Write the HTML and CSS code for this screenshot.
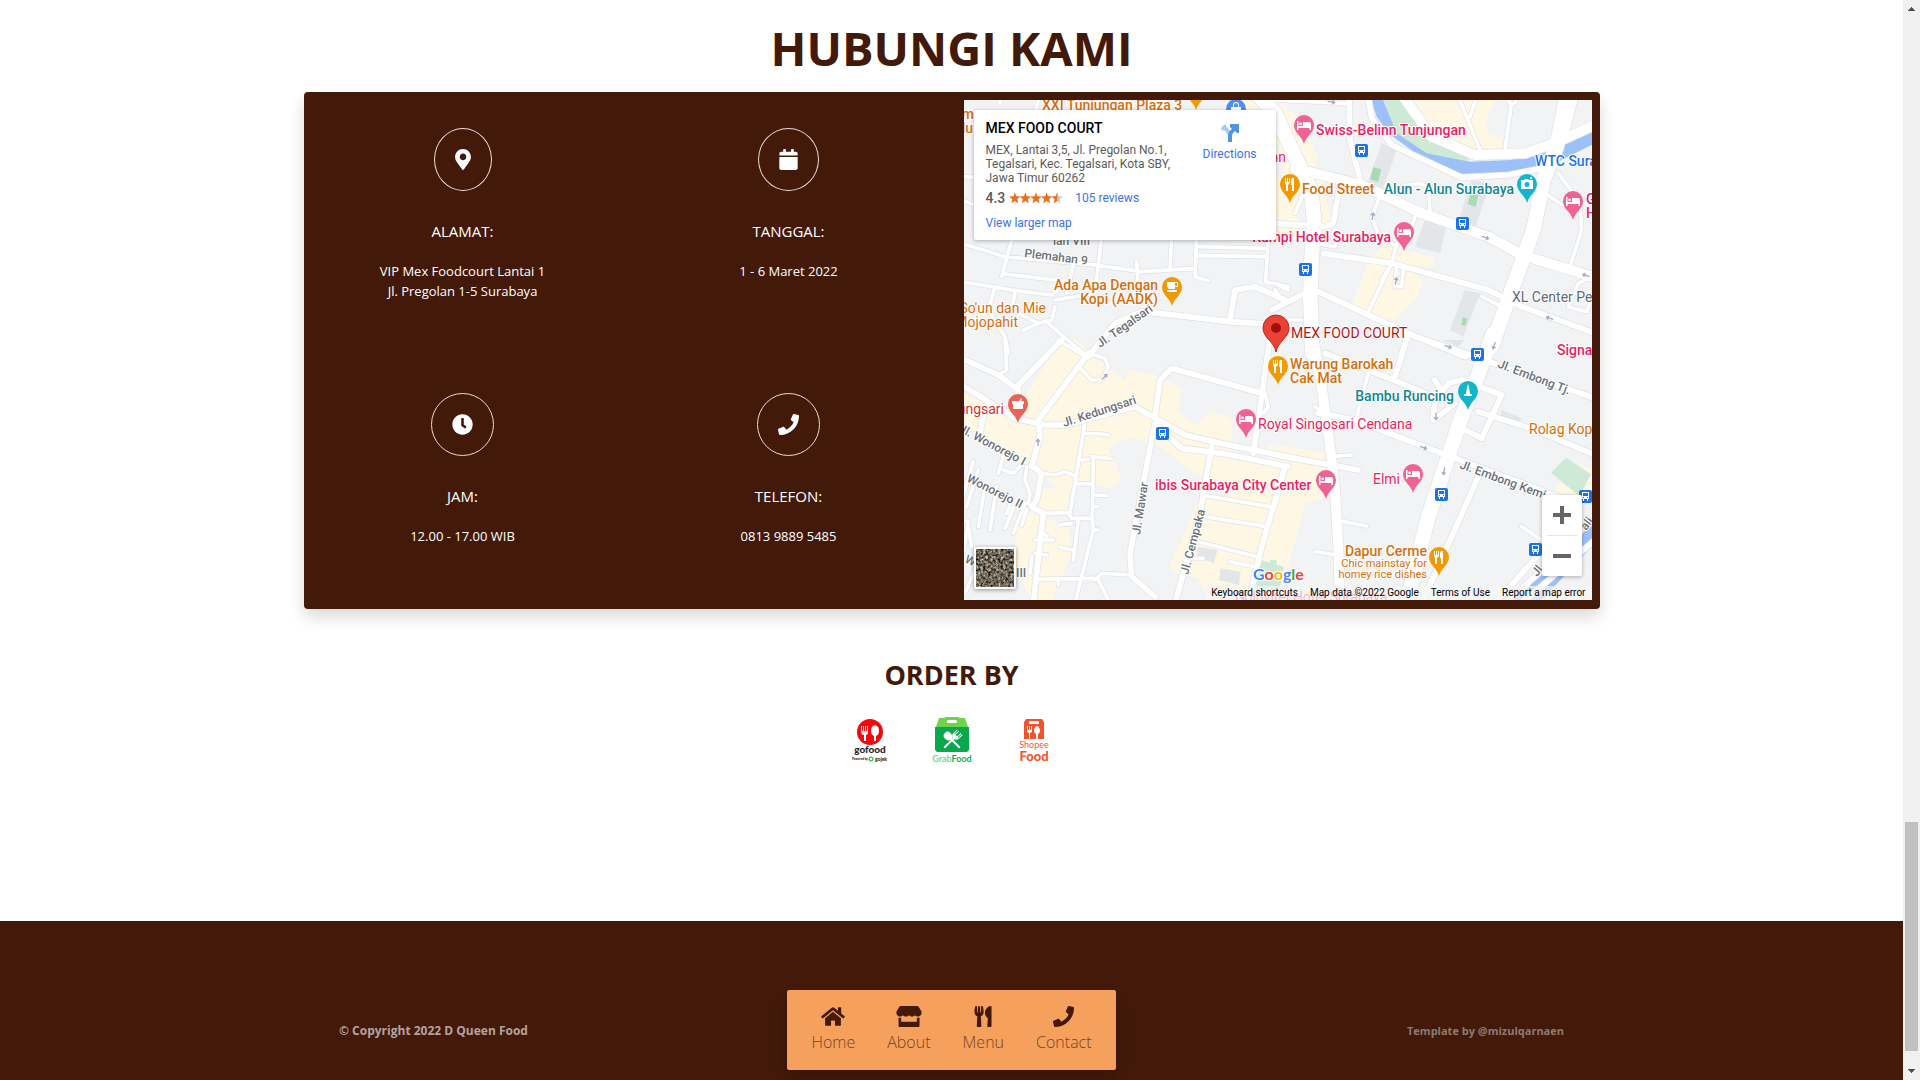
FILE: index.html
```html
<!DOCTYPE html>
<html lang="id">
<head>
<meta charset="utf-8">
<meta name="viewport" content="width=device-width, initial-scale=1">
<title>D Queen Food</title>
<link rel="stylesheet" href="styles.css">
</head>
<body>
<svg class="defs" aria-hidden="true">
  <defs>
    <symbol id="i-marker" viewBox="0 0 384 512"><path d="M172.268 501.67C26.97 291.031 0 269.413 0 192 0 85.961 85.961 0 192 0s192 85.961 192 192c0 77.413-26.97 99.031-172.268 309.67-9.535 13.774-29.93 13.773-39.464 0zM192 272c44.183 0 80-35.817 80-80s-35.817-80-80-80-80 35.817-80 80 35.817 80 80 80z"/></symbol>
    <symbol id="i-calendar" viewBox="0 0 448 512"><path d="M12 192h424c6.600 0 12 5.400 12 12v260c0 26.500-21.500 48-48 48H48c-26.500 0-48-21.500-48-48V204c0-6.600 5.400-12 12-12zm436-44v-36c0-26.500-21.500-48-48-48h-48V12c0-6.600-5.400-12-12-12h-40c-6.600 0-12 5.400-12 12v52H160V12c0-6.600-5.400-12-12-12h-40c-6.600 0-12 5.400-12 12v52H48C21.500 64 0 85.500 0 112v36c0 6.600 5.400 12 12 12h424c6.600 0 12-5.400 12-12z"/></symbol>
    <symbol id="i-clock" viewBox="0 0 512 512"><path d="M256 8C119 8 8 119 8 256s111 248 248 248 248-111 248-248S393 8 256 8zm92.490 313l-20 25a16 16 0 0 1-22.490 2.500l-67-49.720a40 40 0 0 1-15-31.230V112a16 16 0 0 1 16-16h32a16 16 0 0 1 16 16v144l58 42.500a16 16 0 0 1 2.490 22.500z"/></symbol>
    <symbol id="i-phone" viewBox="0 0 512 512"><path d="M493.400 24.600l-104-24c-11.300-2.600-22.900 3.300-27.500 13.900l-48 112c-4.200 9.800-1.400 21.300 6.900 28l60.600 49.600c-36 76.700-98.900 140.500-177.200 177.200l-49.600-60.600c-6.800-8.300-18.200-11.100-28-6.900l-112 48C3.900 366.500-2 378.100.6 389.400l24 104C27.100 504.200 36.700 512 48 512c256.100 0 464-207.500 464-464 0-11.200-7.700-20.900-18.600-23.400z"/></symbol>
    <symbol id="i-home" viewBox="0 0 576 512"><path d="M280.370 148.260L96 300.110V464a16 16 0 0 0 16 16l112.060-.29a16 16 0 0 0 15.920-16V368a16 16 0 0 1 16-16h64a16 16 0 0 1 16 16v95.640a16 16 0 0 0 16 16.050L464 480a16 16 0 0 0 16-16V300L295.670 148.260a12.190 12.190 0 0 0-15.300 0zM571.600 251.470L488 182.560V44.050a12 12 0 0 0-12-12h-56a12 12 0 0 0-12 12v72.610L318.470 43a48 48 0 0 0-61 0L4.340 251.470a12 12 0 0 0-1.600 16.900l25.500 31A12 12 0 0 0 45.150 301l235.220-193.740a12.190 12.190 0 0 1 15.300 0L530.900 301a12 12 0 0 0 16.900-1.600l25.500-31a12 12 0 0 0-1.700-16.930z"/></symbol>
    <symbol id="i-store" viewBox="0 0 616 512"><path d="M602 118L537 15C531 6 521 0 510 0H106C95 0 85 6 79 15L14 118c-34 54-4 128 59 137 5 1 9 1 14 1 30 0 56-13 74-33 18 20 44 33 73 33 30 0 56-13 74-33 18 20 44 33 74 33s56-13 73-33c18 20 44 33 74 33 5 0 9 0 14-1 63-9 93-83 59-137zM529 288c-10 0-20-2-30-4v100H117V284c-10 2-20 4-30 4-6 0-12 0-18-1-5-1-11-2-16-4v197c0 18 14 32 32 32h448c18 0 32-14 32-32V283c-6 2-11 3-17 4-6 1-12 1-19 1z"/></symbol>
    <symbol id="i-utensils" viewBox="0 0 416 512"><path d="M207.900 15.200c.8 4.700 16.100 94.500 16.100 128.800 0 52.300-27.800 89.600-68.900 104.600L168 486.700c.7 13.700-10.200 25.300-24 25.300H80c-13.700 0-24.700-11.500-24-25.300l12.900-238.100C27.700 233.600 0 196.200 0 144 0 109.600 15.300 19.900 16.100 15.200 19.300-5.100 61.400-5.400 64 16.300v141.200c1.300 3.400 15.100 3.200 16 0 1.400-25.300 7.900-139.200 8-141.800 3.300-20.800 44.700-20.800 47.900 0 .2 2.700 6.600 116.500 8 141.800.9 3.200 14.800 3.400 16 0V16.300c2.600-21.600 44.800-21.400 48-1.100zm119.200 285.700l-15 185.100c-1.200 14 9.900 26 23.900 26h56c13.300 0 24-10.700 24-24V24c0-13.200-10.700-24-24-24-82.500 0-221.400 178.500-64.900 300.900z"/></symbol>
    <path id="drop" d="M0 19C-2 11-10 8-10 0a10 10 0 1 1 20 0C10 8 2 11 0 19z"/>
    <g id="p-bed" class="pink"><use href="#drop"/><path fill="#fff" d="M-7-4h1.500v5H-1v-4h6a2 2 0 0 1 2 2v6H5.500V3h-11v2H-7zM-3.400-2.600a1.400 1.400 0 1 1 0 2.800 1.400 1.400 0 0 1 0-2.800z"/></g>
    <g id="p-food" class="orange"><use href="#drop"/><path fill="#fff" d="M-5-6h1v4h1v-4h1v4h1v-4h1v5L-2 1v6h-2V1l-1-2zM2-6h2V7H2V1H1v-5z"/></g>
    <g id="p-cup" class="orange"><use href="#drop"/><path fill="#fff" d="M-5-5H6v5H3v2h-6l-2-2zM3-4v3h2v-3zM-5 3H5v2H-5z"/></g>
    <g id="p-camera" class="teal"><use href="#drop"/><path fill="#fff" fill-rule="evenodd" d="M-6-4h3l1-1h3l1 1h4v9H-6zM0-2a2.500 2.500 0 1 0 0 5 2.500 2.500 0 0 0 0-5zM3-7h2v2H3z"/></g>
    <g id="p-tower" class="teal"><use href="#drop"/><path fill="#fff" d="M0-7l1 3 1 7h2v2h-8V3h2l1-7z"/></g>
    <g id="p-bowl" class="coral"><use href="#drop"/><path fill="#fff" d="M-6-3H1l2-3 1 1-1 2h3v3H5v5H-5V0h-1z"/></g>
    <g id="bus"><rect x="-6" y="-6" width="13" height="13" rx="2" fill="#1a73e8"/><path fill="#fff" fill-rule="evenodd" d="M-3-4h7v7H3v2H2V3h-3v2h-1V3h-1zm1 1v3h5v-3zm0 4v1h1V1zm4 0v1h1V1z"/></g>
    <path id="arrow" d="M-12-2H2v-6L12 0 2 8V2h-14z" fill="#a3a9c4"/>
    <path id="star" d="M6 0l1.500 4.200L12 4.400 8.500 7.200 9.700 11.500 6 9 2.300 11.500 3.500 7.200 0 4.400l4.500-.2z"/>
  </defs>
</svg>

<div class="page">
  <div class="content">
    <main class="contact">
      <h1>HUBUNGI KAMI</h1>
      <section class="card">
        <div class="infos">
          <div class="info">
            <span class="ring"><svg class="w16"><use href="#i-marker"/></svg></span>
            <h2>ALAMAT:</h2>
            <p>VIP Mex Foodcourt Lantai 1<br>Jl. Pregolan 1-5 Surabaya</p>
          </div>
          <div class="info">
            <span class="ring"><svg class="w19"><use href="#i-calendar"/></svg></span>
            <h2>TANGGAL:</h2>
            <p>1 - 6 Maret 2022</p>
          </div>
          <div class="info">
            <span class="ring"><svg class="w21"><use href="#i-clock"/></svg></span>
            <h2>JAM:</h2>
            <p>12.00 - 17.00 WIB</p>
          </div>
          <div class="info">
            <span class="ring"><svg class="w21"><use href="#i-phone"/></svg></span>
            <h2>TELEFON:</h2>
            <p>0813 9889 5485</p>
          </div>
        </div>
        <div class="map">
          <svg class="canvas" viewBox="0 0 628 500" preserveAspectRatio="xMidYMid slice" role="img" aria-label="Peta Mex Food Court">
            <defs>
              <g id="roads">
                <g transform="translate(-27,-30)">
                  <path class="s" d="M20 460L150 500 420 525 560 545 720 535M20 575L170 600 290 615 320 590M170 450L140 560M150 552L340 575M355 525L335 610M440 440L420 610 300 630M545 515L548 570M650 440L645 535M725 440L720 560 760 572M730 497L935 500M730 470L935 475M940 440L932 575 1000 590M180 600L172 660 250 700 205 720 250 700 290 690 300 650M120 590L100 660 150 740 160 790M280 700L350 760 400 800M27 260L60 262M20 330L60 345M250 30L240 70M135 20v20"/>
                  <path class="m" d="M400 800L480 700 560 665 700 680 820 695 1000 705M825 690L840 600 900 590 990 630"/>
                </g>
                <g transform="translate(933,-30)">
                  <path class="xl" d="M-120 -60L0 70 65 210 108 300 118 400 110 500 106 620 112 790"/>
                  <path class="l" d="M60 235L260 285 440 370 640 440 740 495 960 562M385 20L470 140 600 195 750 190 850 155 960 105M895 20L860 150"/>
                  <path class="xl" d="M875 20L845 170 805 270 775 420 750 490 710 600 650 770"/>
                  <path class="m" d="M280 20L290 85 350 165 560 262 700 255 800 235M222 20L225 150 258 280M145 490L350 520 640 600 740 650 960 730M130 605L400 730 570 800M0 400L150 410 175 400 190 310M-10 660L90 610"/>
                  <path class="s" d="M550 20L615 180M605 20L585 80M708 50L690 180M700 30a12 12 0 1 0 24 0M365 460L350 520 280 665M350 520L320 570M310 330L290 385 310 430 365 470M465 360L460 290 430 280 380 290M420 380L405 430M850 250L880 290 915 340 920 420 885 530M810 310L870 350M365 525L360 590 380 590 385 540M0 30L210 40M60 370L90 300M0 580L40 600M0 600L30 640M40 440L150 465 180 470 195 430M950 560L910 580 880 650 935 665 945 640M620 620L680 650M400 730L380 800M-10 690L80 690"/>
                </g>
                <g transform="translate(-27,720)">
                  <path class="m" d="M20 55L130 105 190 150 188 240M20 135L180 235 270 255 330 255 540 200 690 285 820 315 1000 350M600 250L680 325 800 340 1000 380M400 40L250 240 255 290 230 380M185 140L320 0M600 250L580 350 525 640 530 710 600 770M600 230L615 120 650 85 920 160M945 -10L920 170 895 340M770 320L735 520 660 790M990 380L920 620 880 790M230 375L260 400 245 480 230 500 265 520 235 790M90 200L75 280"/>
                  <path class="s" d="M310 0L390 50M370 80L410 120 440 120 460 80 450 55 400 40M150 0L155 90 130 105M390 240L385 280 360 430 345 520M395 280L440 282 460 285M375 360L400 358M410 350L470 356M415 350L412 530 415 570 360 790M360 430L405 432M260 400L300 405 330 395 355 405M415 465L455 467M415 500h15M265 520L340 518 350 535 410 535M370 540L355 660M350 550L315 555M355 630L315 622M415 570h15M20 480L55 365M35 500L70 390M70 560L90 440M105 570L125 440M155 520L170 480M175 580L210 490M150 565L185 480M200 555L215 510M130 400L145 350M145 390L175 400 195 380M215 380L210 420 225 460 220 490M20 540L40 545 25 640M40 560L50 620M30 760L60 690M240 600L295 600M240 640L275 645M262 575L275 590M230 650L225 700M240 718L420 715M420 720L440 700 530 705M430 720L460 780M310 715v20M740 465L945 500M750 530L935 560M730 605L905 650M825 665L900 680M745 655L710 655M930 160L940 200 925 220"/>
                </g>
                <g transform="translate(933,720)">
                  <path class="l" d="M112 -20L140 140 165 320 180 450 190 620 195 790"/>
                  <path class="xl" d="M655 -20L600 130 560 230 520 350 460 530 395 790"/>
                  <path class="m" d="M420 -10L600 50 960 175M150 40L330 110 500 180M130 220L240 240 500 340 850 470M480 120L510 175M540 190L475 240 480 180 520 130 560 120 680 165 620 295 570 270M610 215L780 270 960 345M400 -20L360 110M610 410L490 680 440 790M0 345L250 390M660 790L830 600M690 790L880 620M740 790L960 600"/>
                  <path class="s" d="M280 100L245 230M165 350L230 345M120 200L150 220M205 545L275 558M120 635L185 645M30 390L0 500M740 560L800 600M0 340L170 375"/>
                </g>
              </g>
            </defs>
            <rect width="628" height="500" fill="#f1f3f4"/>
            <g transform="scale(.333333)">
              <g transform="translate(-27,-30)" class="shop"><path d="M850 30h130l60 90 60 150 30 130-40 10-20-90-70-30-40-150zM960 400h160l-20 60-140-10zM300 790l60-45 40 40z"/></g>
              <g transform="translate(933,-30)">
                <path class="shop" d="M405 20h260l-35 80 15 35 40 5-5 45-80 5-120-50zM330 460l40 15 110 30-10 30-40-10-10 20 25 30-20 50-60 60-50 10-90-40 60-150zM0 40l60 30 50 80 20 50-10 40-60-60zM0 250l70 60 0 90-70 0zM-10 400l100 30-60 30-40-10z"/>
                <path fill="#ceead6" d="M320 20h65l85 110 115 70-10 20-130-20-90-70z"/>
                <path fill="#9cc0f9" d="M285 20h35l45 110 90 60 130 25 120-5 100-20 155-70v40l-120 60-160 30-120 5-110-45-110-80-35-50z"/>
                <path fill="#e3e6e8" d="M320 160l45 20-50 140-45-20zM590 270l55 10-50 150-50-20zM450 390l65 15-20 85-75-20zM570 600l45 10-50 130-40-20z"/>
                <path fill="#a8dab5" d="M295 232l24 6-10 38-24-8zM588 308l22 6-8 36-24-8zM563 682l14 4-6 22-12-4z"/>
              </g>
              <g transform="translate(-27,720)" class="shop"><path d="M320 0l90 45 60 45 40 30 10-30 80 15 80 40-10 70 50 40 50-40 60 20 0 120 170 20-20 350-200 80-50-80 60-30 20-270-100-30-60-50-60-40-70-10-60 30 40 90-30 30-80-20-60 40-90-80-130-60-110-100v-80l170 80zM240 280l60 30-20 90-30-20zM255 445h85v75h-85zM200 510l60 20 80 30 10 80-60 140h-60l-60-120zM640 690l100-230 60 10 40 140-60 120z"/></g>
              <g transform="translate(933,720)">
                <path class="shop" d="M-20 310l170 30 20 130-80 20-60 230-50 0zM830 460l60-80 70 0v90zM790 540l40 0v30z"/>
                <path fill="#ceead6" d="M873 353l75 50-35 65-85-70zM-15 660h20v130h-20z"/>
                <path fill="#9cc0f9" d="M960 540v70L790 790h-90l140-120z"/>
                <path fill="#e3e6e8" d="M680 210l60 25-15 20-50-20zM500 0h70l-20 20z"/>
              </g>
              <path fill="#ceead6" d="M890 1380l70 20-20 100h-70z"/>
              <path fill="#e3e6e8" d="M700 1340l60 10-10 40-50-20zM770 1405l60 10-5 40-60-15z"/>
              <use class="edge" href="#roads"/>
              <use class="fill" href="#roads"/>
              <g transform="translate(933,-30)">
                <use href="#arrow" transform="translate(170,36) rotate(8)"/><use href="#arrow" transform="translate(293,378) rotate(-80)"/><use href="#arrow" transform="translate(632,443) rotate(20)"/><use href="#arrow" transform="translate(363,572) rotate(-80)"/><use href="#arrow" transform="translate(823,684) rotate(200)"/><use href="#arrow" transform="translate(932,556) rotate(200)"/><use href="#arrow" transform="translate(657,768) rotate(110)"/><use href="#arrow" transform="translate(520,770) rotate(20)"/>
                <use href="#arrow" transform="translate(483,980) rotate(90)"/><use href="#arrow" transform="translate(446,1073) rotate(18)"/><use href="#arrow" transform="translate(507,1145) rotate(100)"/>
              </g>
              <use href="#arrow" transform="translate(222,1027) rotate(-90)"/><use href="#arrow" transform="translate(422,830) rotate(-45)"/>
            </g>
            <g class="street">
              <text transform="translate(60,157) rotate(7)">Plemahan 9</text>
              <text x="89" y="145">lan VIII</text>
              <text transform="translate(136,248) rotate(-35)">Jl. Tegalsari</text>
              <text transform="translate(100,327) rotate(-18)">Jl. Kedungsari</text>
              <text transform="translate(-6,331) rotate(28)">Jl. Wonorejo I</text>
              <text transform="translate(2,381) rotate(27)">Wonorejo II</text>
              <text transform="translate(0,462) rotate(25)">W</text>
              <text x="52" y="477">III</text>
              <text transform="translate(176,435) rotate(-81)">Jl. Mawar</text>
              <text transform="translate(224,475) rotate(-75)">Jl. Cempaka</text>
              <text transform="translate(533,267) rotate(21)">Jl. Embong Tj.</text>
              <text transform="translate(495,368) rotate(20)">Jl. Embong Kemi</text>
              <text transform="translate(573,477) rotate(-50)">Jl.</text>
              <text transform="translate(622,431) rotate(-52)">ali</text>
            </g>
            <g class="label">
              <g class="c-orange">
                <text x="78" y="10">XXI Tunjungan Plaza 3</text>
                <text class="end" x="10" y="19">Jam</text><text class="end" x="9" y="33">Mlu</text>
                <text x="338" y="94">Food Street</text>
                <text class="end" x="194" y="190">Ada Apa Dengan</text><text class="end" x="194" y="204">Kopi (AADK)</text>
                <text class="end r" x="82" y="213">So'un dan Mie</text><text class="end r" x="54" y="227">Mojopahit</text>
                <text x="326" y="269">Warung Barokah</text><text x="326" y="283">Cak Mat</text>
                <text x="565" y="334" class="r">Rolag Kop</text>
                <text class="end" x="463" y="456">Dapur Cerme</text>
                <text class="end small" x="463" y="467">Chic mainstay for</text><text class="end small" x="463" y="478">homey rice dishes</text>
              </g>
              <g class="c-pink">
                <text x="352" y="35">Swiss-Belinn Tunjungan</text>
                <text class="end r" x="322" y="62">an</text>
                <text x="622" y="104">G</text><text x="622" y="118">H</text>
                <text class="end" x="427" y="142">Kumpi Hotel Surabaya</text>
                <text x="593" y="255">Signature</text>
                <text class="r" x="294" y="329">Royal Singosari Cendana</text>
                <text x="191" y="390">ibis Surabaya City Center</text>
                <text class="end r" x="436" y="384">Elmi</text>
                <text class="r" x="271" y="502">Goldvitel Hotel Surabaya</text>
              </g>
              <g class="c-teal">
                <text class="end" x="550" y="94">Alun - Alun Surabaya</text>
                <text class="end" x="490" y="301">Bambu Runcing</text>
              </g>
              <text class="c-blue" x="571" y="66">WTC Surabaya</text>
              <text class="c-slate r" x="548" y="202">XL Center Pe</text>
              <text class="c-red r end" x="40" y="314">Kedungsari</text>
              <text class="c-dark r" x="327" y="238">MEX FOOD COURT</text>
            </g>
            <use href="#p-food" x="232" y="-9"/>
            <circle cx="272" cy="9" r="10" fill="#4f8ff0"/><path fill="#fff" fill-rule="evenodd" d="M267 7h2V5a3 3 0 0 1 6 0v2h2v7h-10zM270 7h4V5a2 2 0 0 0-4 0z"/>
            <use href="#p-bed" x="340" y="25"/><use href="#p-bed" x="609" y="101"/><use href="#p-bed" x="440" y="132"/><use href="#p-bed" x="282" y="319"/><use href="#p-bed" x="362" y="380"/><use href="#p-bed" x="449" y="374"/>
            <use href="#p-food" x="326" y="84"/><use href="#p-food" x="314" y="266"/><use href="#p-food" x="475" y="457"/>
            <use href="#p-cup" x="208" y="187"/><use href="#p-camera" x="563" y="84"/><use href="#p-tower" x="504" y="291"/><use href="#p-bowl" x="54" y="304"/>
            <use href="#bus" x="397" y="50"/><use href="#bus" x="498" y="123"/><use href="#bus" x="341" y="169"/><use href="#bus" x="513" y="254"/><use href="#bus" x="198" y="333"/><use href="#bus" x="477" y="394"/><use href="#bus" x="621" y="396"/><use href="#bus" x="571" y="449"/>
            <path fill="#ea4335" stroke="#c5221f" d="M312 252c-2-11-13-14-13-24a13 13 0 0 1 26 0c0 10-11 13-13 24z"/><circle cx="312" cy="228" r="5" fill="#a50e0e"/>
            <text class="google" x="289" y="480"><tspan fill="#4285f4">G</tspan><tspan fill="#ea4335">o</tspan><tspan fill="#fbbc04">o</tspan><tspan fill="#4285f4">g</tspan><tspan fill="#34a853">l</tspan><tspan fill="#ea4335">e</tspan></text>
          </svg>
          <div class="place">
            <div class="place-text">
              <strong>MEX FOOD COURT</strong>
              <address>MEX, Lantai 3,5, Jl. Pregolan No.1,<br>Tegalsari, Kec. Tegalsari, Kota SBY,<br>Jawa Timur 60262</address>
              <div class="rating">
                <b>4.3</b>
                <svg class="stars" viewBox="0 0 56 12"><g fill="#e7711b"><use href="#star"/><use href="#star" x="11"/><use href="#star" x="22"/><use href="#star" x="33"/></g><use href="#star" x="44" fill="#c9c9c9"/><path fill="#e7711b" d="M50 0v9l-3.700 2.500 1.200-4.300L44 4.400l4.500-.2z"/></svg>
                <a href="#reviews">105 reviews</a>
              </div>
              <a href="#larger">View larger map</a>
            </div>
            <a class="directions" href="#directions">
              <svg viewBox="0 0 18 18"><path fill="#a6cbf5" d="M0 4l4-4 1 2 6 7-3 3-5-6-2 1z"/><path fill="#5294e2" d="M7 18v-7c0-3 2-4 4-6L9 3V0h9v9h-2l-2-2c-2 2-3 3-3 5v6z"/></svg>
              Directions
            </a>
          </div>
          <button class="satellite" aria-label="Show satellite imagery">
            <svg viewBox="0 0 38 38"><filter id="grain" x="0" y="0" width="1" height="1" color-interpolation-filters="sRGB"><feTurbulence type="fractalNoise" baseFrequency=".4" numOctaves="3" seed="4"/><feColorMatrix values="1.200 0 0 0 -.17 1.200 0 0 0 -.2 1.200 0 0 0 -.25 0 0 0 0 1"/></filter><rect width="38" height="38" filter="url(#grain)"/></svg>
          </button>
          <div class="zoom">
            <button aria-label="Zoom in"><svg viewBox="0 0 18 18"><path d="M7 0h4v7h7v4h-7v7H7v-7H0V7h7z"/></svg></button>
            <button aria-label="Zoom out"><svg viewBox="0 0 18 18"><path d="M0 7h18v4H0z"/></svg></button>
          </div>
          <div class="legal">
            <button>Keyboard shortcuts</button><span>Map data ©2022 Google</span><a href="#terms">Terms of Use</a><a href="#report">Report a map error</a>
          </div>
        </div>
      </section>
      <section class="order">
        <h2>ORDER BY</h2>
        <div class="logos">
          <a href="#gofood" aria-label="GoFood"><svg viewBox="0 0 50 50">
            <circle cx="25" cy="17" r="13" fill="#f80610"/>
            <path fill="#fff" d="M16 11h1v5h1v-5h1v5h1v-5h1v5h1v-5h1v6q0 3-2 3v6h-2v-6q-3 0-3-4zM30 10q4 1 4 6 0 4-3 5v5h-2v-5q-3-1-3-5 0-5 4-6z"/>
            <text x="25" y="38" class="lg lg-dark" font-size="10">gofood</text>
            <text x="15" y="45" class="lg lg-dark" font-size="3">Powered by</text><circle cx="26" cy="44" r="2" fill="none" stroke="#00aa13"/><text x="36" y="46" class="lg lg-dark" font-size="5">gojek</text></svg></a>
          <a href="#grabfood" aria-label="GrabFood"><svg viewBox="0 0 50 50">
            <path fill="#6fd44b" d="M9 12L12 3h5l2-1h12l2 1h5l3 9z"/><rect x="20" y="5" width="10" height="3" rx="1" fill="#fff"/>
            <path fill="#07a94b" d="M8 12h34v23l-2 2H10l-2-2z"/>
            <g fill="#fff"><path transform="translate(25,25) rotate(-45)" d="M-1 11V-1q-3-1-3-5 0-4 4-4t4 4q0 4-3 5v12z"/><path transform="translate(25,25) rotate(45)" d="M-1 11V-2q-3-1-3-4v-5h1v5h1v-5h1v5h2v-5h1v5h1v-5h1v5q0 3-3 4v13z"/></g>
            <text x="25" y="47" class="lg lg-mid" font-size="9"><tspan fill="#78d69b">Grab</tspan><tspan fill="#12ad52">Food</tspan></text></svg></a>
          <a href="#shopeefood" aria-label="ShopeeFood"><svg viewBox="0 0 50 50">
            <path fill="#f2532f" d="M17 4h16l2 3v17H15V7z"/><rect x="20" y="6" width="10" height="3" rx="1" fill="#fff"/>
            <path fill="#fff" d="M18 11h1v4h1v-4h1v4h1v-4h1v6l-2 1v6h-1v-6l-2-1zM28 11q3 1 3 5 0 2-2 3v5h-2v-5q-2-1-2-3 0-4 3-5z"/>
            <text x="25" y="33" class="lg lg-shop" font-size="9">Shopee</text><text x="25" y="46" class="lg lg-shop lg-bold" font-size="13">Food</text></svg></a>
        </div>
      </section>
    </main>
    <footer>
      <div class="foot">
        <p class="copy">© Copyright 2022 D Queen Food</p>
        <nav>
          <a href="#home"><svg class="w24"><use href="#i-home"/></svg>Home</a>
          <a href="#about"><svg class="w26"><use href="#i-store"/></svg>About</a>
          <a href="#menu"><svg class="w18"><use href="#i-utensils"/></svg>Menu</a>
          <a href="#contact"><svg class="w21"><use href="#i-phone"/></svg>Contact</a>
        </nav>
        <p class="credit">Template by @mizulqarnaen</p>
      </div>
    </footer>
  </div>
  <div class="scrollbar" aria-hidden="true">
    <svg viewBox="0 0 7 4"><path d="M3 0h1v1h1v1h1v1h1v1H0V3h1V2h1V1h1z"/></svg>
    <div class="track"><div class="thumb"></div></div>
    <svg viewBox="0 0 7 4"><path d="M0 0h7v1H6v1H5v1H4v1H3V3H2V2H1V1H0z"/></svg>
  </div>
</div>
</body>
</html>
```
FILE: styles.css
```css
* { box-sizing: border-box; }
body { margin: 0; background: #fff; color: #43190a; font-family: "Open Sans", "Noto Sans", sans-serif; }
h1, h2, p { margin: 0; }
a { color: inherit; text-decoration: none; }
button { border: 0; padding: 0; background: none; font: inherit; color: inherit; }
.defs { display: block; width: 0; height: 0; position: absolute; }

.page { display: grid; grid-template-columns: minmax(0, 1fr) 17px; min-height: 100vh; }
.content { display: flex; flex-direction: column; }

.contact { flex: 1; width: 100%; max-width: 1296px; margin: 0 auto; padding-top: 18px; }
h1 { font-size: 47px; line-height: 60px; text-align: center; font-weight: 700; }

.card { display: grid; grid-template-columns: 1fr 1fr; margin-top: 14px; padding: 8px 0 9px; background: #43190a; border-radius: 4px; box-shadow: 0 8px 16px rgba(0, 0, 0, .15); }
.infos { display: grid; grid-template-columns: 1fr 1fr; align-content: start; row-gap: 92px; margin-left: -4px; padding-top: 28px; color: #fff; text-align: center; }
.info { display: flex; flex-direction: column; align-items: center; }
.info h2 { margin: 28px 0 18px; font-size: 15px; line-height: 24px; font-weight: 400; }
.info p { font-size: 13px; line-height: 20px; }
.ring { padding: 20px; border: 1px solid #e5dcd8; border-radius: 50%; }
.ring svg { display: block; height: 21px; fill: #fff; }
.w16 { width: 16px; }
.w18 { width: 18px; }
.w19 { width: 19px; }
.w21 { width: 21px; }
.w24 { width: 24px; }
.w26 { width: 26px; }

.map { position: relative; height: 500px; margin: 0 8px 0 12px; overflow: hidden; font-family: Roboto, Arial, sans-serif; }
.canvas { display: block; width: 100%; height: 100%; }
#roads path { fill: none; stroke-linecap: round; stroke-linejoin: round; stroke-width: calc(var(--w) + var(--edge)); }
#roads .s { --w: 11px; }
#roads .m { --w: 17px; }
#roads .l { --w: 30px; }
#roads .xl { --w: 44px; }
.edge { --edge: 4px; stroke: #dee1e5; }
.fill { --edge: 0px; stroke: #fff; }
.shop { fill: #fef7e4; }
.pink { fill: #f06292; }
.orange { fill: #f29900; }
.teal { fill: #12b5cb; }
.coral { fill: #ec6257; }
.label text, .street text { paint-order: stroke; stroke: #fff; stroke-width: 2px; stroke-linejoin: round; }
.label text { font-size: 14px; font-weight: 500; }
.label .r { font-weight: 400; }
.label .small { font-size: 11px; font-weight: 400; }
.end { text-anchor: end; }
.street text { font-size: 12px; font-weight: 500; fill: #6b7076; }
.c-orange { fill: #d56e0c; }
.c-pink { fill: #e91e63; }
.c-teal { fill: #12858d; }
.c-blue { fill: #1a73e8; }
.c-slate { fill: #5f6b7a; }
.c-red { fill: #d93025; }
.c-dark { fill: #b31412; }
.google { font-family: Lato, sans-serif; font-size: 16px; font-weight: 700; paint-order: stroke; stroke: #fff; stroke-width: 2px; }

.place { position: absolute; left: 10px; top: 10px; width: 302px; display: flex; justify-content: space-between; padding: 9px 19px 10px 12px; background: #fff; border-radius: 2px; box-shadow: 0 1px 4px rgba(0, 0, 0, .3); font-size: 12px; line-height: 14px; }
.place a { color: #3a72ec; }
.place strong { display: block; font-size: 14px; line-height: 18px; font-weight: 500; color: #000; }
.place address { margin-top: 6px; font-style: normal; color: #5b5b5b; }
.rating { display: flex; align-items: center; margin: 5px 0 10px; line-height: 16px; }
.rating b { font-size: 14px; font-weight: 500; color: #5b5b5b; }
.stars { width: 54px; height: 12px; margin: 0 12px 0 4px; }
.directions { display: flex; flex-direction: column; align-items: center; gap: 5px; padding-top: 5px; }
.directions svg { width: 18px; height: 18px; }

.satellite { position: absolute; left: 10px; bottom: 11px; width: 42px; height: 42px; border: 2px solid #fff; border-radius: 2px; box-shadow: 0 1px 4px rgba(0, 0, 0, .4); }
.satellite svg { display: block; width: 38px; height: 38px; }
.zoom { position: absolute; right: 10px; bottom: 24px; width: 40px; background: #fff; border-radius: 2px; box-shadow: 0 1px 4px rgba(0, 0, 0, .3); }
.zoom button { display: grid; place-items: center; width: 40px; height: 40px; }
.zoom button + button { margin: 0 5px; width: 30px; height: 41px; border-top: 1px solid #e6e6e6; }
.zoom svg { width: 18px; height: 18px; fill: #666; }
.legal { position: absolute; right: 0; bottom: 0; display: flex; background: rgba(245, 245, 245, .7); font-size: 10px; line-height: 14px; color: #000; }
.legal > * { padding: 0 6px; }

.order { margin-top: 46px; text-align: center; }
.order h2 { font-size: 27px; line-height: 40px; font-weight: 700; }
.logos { display: flex; justify-content: center; gap: 32px; margin-top: 20px; }
.logos a, .logos svg { display: block; width: 50px; height: 50px; }
.lg { font-family: Lato, sans-serif; text-anchor: middle; }
.lg-dark { fill: #262626; font-weight: 900; }
.lg-mid { font-weight: 700; }
.lg-shop { fill: #f2532f; }
.lg-bold { font-weight: 900; }

footer { padding: 69px 24px 10px; background: #43190a; }
.foot { display: grid; grid-template-columns: 1fr auto 1fr; align-items: center; width: 100%; max-width: 1225px; margin: 0 auto; font-weight: 700; }
.copy { font-size: 12px; color: #b4a39d; }
.credit { font-size: 11px; color: #8e7a73; text-align: right; }
nav { display: flex; gap: 32px; height: 80px; padding: 16px 24px 0; background: #f5a05c; border-radius: 2px; box-shadow: 0 8px 16px rgba(0, 0, 0, .15); color: #7a4322; font-size: 16px; line-height: 24px; font-weight: 300; }
nav a { display: flex; flex-direction: column; align-items: center; gap: 3px; }
nav svg { height: 21px; fill: #43190a; }

.scrollbar { position: sticky; top: 0; display: flex; flex-direction: column; align-items: center; height: 100vh; padding: 7px 0; background: #f0f0f0; }
.scrollbar svg { width: 7px; height: 4px; fill: #505050; }
.track { flex: 1; width: 13px; display: flex; align-items: flex-end; padding-bottom: 18px; }
.thumb { width: 100%; height: 22%; background: #c1c1c1; }
```
